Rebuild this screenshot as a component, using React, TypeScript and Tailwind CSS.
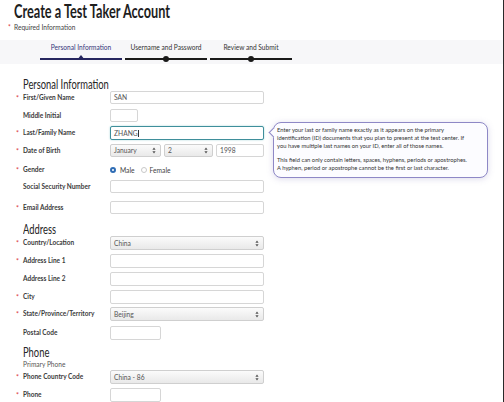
import React from "react"

const font = { fontFamily: "Lato, 'Open Sans', sans-serif" }

function Req({ on }: { on?: boolean }) {
  return (
    <span className="w-[7px] shrink-0 text-[7px] leading-[7px] text-[#d9363e] pt-[1px]">
      {on ? "*" : ""}
    </span>
  )
}

function Arrows() {
  return (
    <svg width="4" height="7" viewBox="0 0 4 7" className="shrink-0">
      <path d="M2 0.5 L3.6 2.8 L0.4 2.8 Z" fill="#555" />
      <path d="M2 6.5 L3.6 4.2 L0.4 4.2 Z" fill="#555" />
    </svg>
  )
}

function Input({ w = "w-[154px]", value, focus }: { w?: string; value?: string; focus?: boolean }) {
  return (
    <div
      className={`${w} h-full rounded-[2px] bg-white flex items-center px-[3px] text-[6.7px] text-[#555] ${
        focus ? "border-[1.5px] border-[#3f8f9b] shadow-[0_0_2px_#9fd0d6]" : "border border-[#d6d6d6]"
      }`}
    >
      {value}
      {focus && <span className="w-[0.5px] h-[7px] bg-[#333] ml-[0.5px]" />}
    </div>
  )
}

function Select({ w = "w-[154px]", value }: { w?: string; value: string }) {
  return (
    <div
      className={`${w} h-full rounded-[2px] border border-[#cfcfcf] bg-gradient-to-b from-[#fbfbfb] to-[#e9e9e9] flex items-center justify-between pl-[3px] pr-[4px] text-[6.7px] text-[#555]`}
    >
      <span>{value}</span>
      <Arrows />
    </div>
  )
}

function Row({
  label,
  req,
  mt,
  h = "h-[14px]",
  children,
}: {
  label: string
  req?: boolean
  mt: string
  h?: string
  children: React.ReactNode
}) {
  return (
    <div className={`flex items-center ${mt} ${h}`}>
      <Req on={req} />
      <span className="w-[87px] shrink-0 text-[6.5px] font-bold text-[#3b3b3b] leading-[8px]">{label}</span>
      <div className="flex items-stretch h-full gap-[3px]">{children}</div>
    </div>
  )
}

function Heading({ text, mt }: { text: string; mt: string }) {
  return (
    <div className={`${mt} h-[14px] pl-[7px] flex items-start text-[14px] leading-[14px]`}>
      <span className="inline-block origin-left scale-x-[0.67] text-[#262626] whitespace-nowrap">{text}</span>
    </div>
  )
}

function Step({ label, active, last }: { label: string; active?: boolean; last?: boolean }) {
  return (
    <div className={`w-[82px] flex flex-col items-center ${last ? "" : "mr-[3px]"}`}>
      <span
        className={`mt-[3px] h-[8px] text-[6.6px] leading-[8px] whitespace-nowrap ${
          active ? "text-[#34347a]" : "text-[#333]"
        }`}
      >
        {label}
      </span>
      <div className="relative mt-[5px] h-[6px] w-full flex items-center justify-center">
        <div className={`absolute left-0 right-0 top-[2.25px] h-[1.5px] ${active ? "bg-[#26265f]" : "bg-[#1a1a1a]"}`} />
        {active ? (
          <svg width="8" height="5" viewBox="0 0 8 5" className="relative -mt-[3px]">
            <path d="M4 0 L8 5 L0 5 Z" fill="#26265f" />
          </svg>
        ) : (
          <div className="relative w-[6px] h-[6px] rounded-full bg-[#1a1a1a]" />
        )}
      </div>
    </div>
  )
}

export default function App() {
  return (
    <div className="relative w-[504px] h-[402px] overflow-hidden bg-white border-r border-[#2a2a2a]" style={font}>
      <div className="h-[22px] pl-[14px] flex items-start text-[19px] leading-[22px]">
        <span className="inline-block origin-left scale-x-[0.67] font-bold text-[#1e1e1e] whitespace-nowrap">
          Create a Test Taker Account
        </span>
      </div>
      <div className="mt-[1px] h-[8px] flex items-center pl-[8px] text-[6.6px] leading-[8px] text-[#444]">
        <span className="w-[6px] text-[#d9363e]">*</span>
        <span>Required Information</span>
      </div>

      <div className="mt-[9px] h-[24px] bg-[#f7f7f9] flex pl-[40px]">
        <Step label="Personal Information" active />
        <Step label="Username and Password" />
        <Step label="Review and Submit" last />
      </div>

      <div className="pl-[16px] flex flex-col">
        <Heading text="Personal Information" mt="mt-[13px]" />
        <Row label="First/Given Name" req mt="mt-0" h="h-[13px]">
          <Input value="SAN" />
        </Row>
        <Row label="Middle Initial" mt="mt-[5px]" h="h-[13px]">
          <Input w="w-[28px]" />
        </Row>
        <Row label="Last/Family Name" req mt="mt-[4px]">
          <Input value="ZHANG" focus />
        </Row>
        <Row label="Date of Birth" req mt="mt-[4px]" h="h-[13px]">
          <Select w="w-[51px]" value="January" />
          <Select w="w-[49px]" value="2" />
          <Input w="w-[48px]" value="1998" />
        </Row>
        <Row label="Gender" req mt="mt-[7px]" h="h-[12px]">
          <div className="flex items-center text-[6.7px] text-[#444]">
            <span className="w-[6px] h-[6px] rounded-full border-[2px] border-[#2f6db5] bg-white" />
            <span className="ml-[4px]">Male</span>
            <span className="ml-[6px] w-[6px] h-[6px] rounded-full border border-[#c9c9c9] bg-white" />
            <span className="ml-[3px]">Female</span>
          </div>
        </Row>
        <Row label="Social Security Number" mt="mt-[4px]" h="h-[13px]">
          <Input />
        </Row>
        <Row label="Email Address" req mt="mt-[8px]" h="h-[13px]">
          <Input />
        </Row>

        <Heading text="Address" mt="mt-[8px]" />
        <Row label="Country/Location" req mt="mt-0">
          <Select value="China" />
        </Row>
        <Row label="Address Line 1" req mt="mt-[4px]">
          <Input />
        </Row>
        <Row label="Address Line 2" mt="mt-[4px]">
          <Input />
        </Row>
        <Row label="City" req mt="mt-[4px]">
          <Input />
        </Row>
        <Row label="State/Province/Territory" req mt="mt-[3px]">
          <Select value="Beijing" />
        </Row>
        <Row label="Postal Code" mt="mt-[5px]">
          <Input w="w-[51px]" />
        </Row>

        <Heading text="Phone" mt="mt-[5px]" />
        <div className="mt-[1px] h-[8px] pl-[7px] text-[6.6px] leading-[8px] text-[#555]">Primary Phone</div>
        <Row label="Phone Country Code" req mt="mt-[2px]">
          <Select value="China - 86" />
        </Row>
        <Row label="Phone" req mt="mt-[4px]">
          <Input w="w-[51px]" />
        </Row>
      </div>

      <div className="absolute left-[273px] top-[122px] w-[215px] h-[56px] rounded-[8px] border border-[#8e88c6] bg-[#fcfcff] shadow-[0_1px_6px_rgba(120,110,180,0.25)] pl-[3px] pt-[3px] text-[5.8px] leading-[8px] text-[#333] whitespace-nowrap">
        <div className="absolute -left-[4px] top-[6px] w-[7px] h-[7px] rotate-45 bg-[#fcfcff] border-l border-b border-[#8e88c6]" />
        <p className="relative">
          Enter your last or family name exactly as it appears on the primary
          <br />
          identification (ID) documents that you plan to present at the test center. If
          <br />
          you have multiple last names on your ID, enter all of those names.
        </p>
        <p className="relative mt-[6px]">
          This field can only contain letters, spaces, hyphens, periods or apostrophes.
          <br />A hyphen, period or apostrophe cannot be the first or last character.
        </p>
      </div>
    </div>
  )
}
